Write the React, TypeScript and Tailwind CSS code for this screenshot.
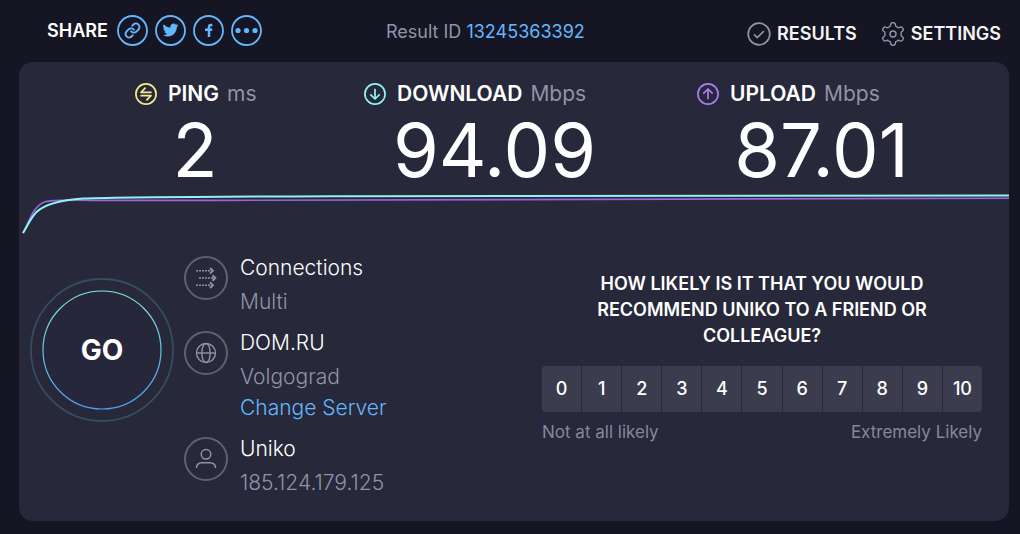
import React, { useState } from 'react';
import { clsx } from 'clsx';

interface Metric {
  name: string;
  unit: string;
  value: string;
  icon: React.ReactNode;
  labelClass: string;
}

// outline of a six-toothed gear centred in a 24px box
const gearPath =
  Array.from({ length: 96 }, (_, i) => {
    const a = (i / 96) * Math.PI * 2;
    const r = 9.7 + 1.6 * Math.tanh(2.6 * (Math.cos(6 * a) - 0.1));
    const x = 12 + r * Math.sin(a);
    const y = 12 - r * Math.cos(a);
    return `${i === 0 ? 'M' : 'L'}${x.toFixed(2)} ${y.toFixed(2)}`;
  }).join('') + 'Z';

const ShareCircle = ({ label, children }: { label: string; children: React.ReactNode }) => (
  <a href="#share" aria-label={label} className="block text-[#62b8ff]">
    <svg viewBox="0 0 31 31" className="h-[31px] w-[31px]" fill="none" stroke="currentColor">
      <circle cx="15.5" cy="15.5" r="14.5" strokeWidth="1.8" />
      {children}
    </svg>
  </a>
);

const InfoCircle = ({ children }: { children: React.ReactNode }) => (
  <svg viewBox="0 0 44 44" className="h-11 w-11 shrink-0" fill="none" stroke="#9193a8">
    <circle cx="22" cy="22" r="21" stroke="#5f6072" strokeWidth="2" />
    {children}
  </svg>
);

const PingIcon = () => (
  <svg viewBox="0 0 22 22" className="h-[22px] w-[22px]" fill="none" stroke="#f5ea8c" strokeWidth="1.7">
    <circle cx="11" cy="11" r="10.1" />
    <path d="M16.6 9.3H6l4.6-4.6M5.4 12.7H16l-4.6 4.6" strokeLinejoin="round" />
  </svg>
);

const ArrowIcon = ({ color, up }: { color: string; up?: boolean }) => (
  <svg viewBox="0 0 22 22" className="h-[22px] w-[22px]" fill="none" stroke={color} strokeWidth="1.7">
    <circle cx="11" cy="11" r="10.1" />
    <path
      d={up ? 'M11 16.3V6.2M6.3 10.6 11 6l4.7 4.6' : 'M11 5.7v10.1M6.3 11.4 11 16l4.7-4.6'}
      strokeLinejoin="round"
    />
  </svg>
);

const metrics: Metric[] = [
  { name: 'PING', unit: 'ms', value: '2', icon: <PingIcon />, labelClass: 'pl-[76px]' },
  {
    name: 'DOWNLOAD',
    unit: 'Mbps',
    value: '94.09',
    icon: <ArrowIcon color="#8ff5ec" />,
    labelClass: 'pl-[33px]',
  },
  {
    name: 'UPLOAD',
    unit: 'Mbps',
    value: '87.01',
    icon: <ArrowIcon color="#b07af7" up />,
    labelClass: 'pl-[39px]',
  },
];

const Header = () => (
  <header className="grid h-[62px] grid-cols-[339fr_615fr] items-start pr-[19px] pl-[47px] text-lg leading-6">
    <div className="flex items-center gap-[7px] pt-[15px]">
      <span className="w-[63px] font-semibold text-white">SHARE</span>
      <ShareCircle label="Copy link">
        <g
          transform="translate(7.1 7.1) scale(.7)"
          strokeWidth="2.7"
          strokeLinecap="round"
          strokeLinejoin="round"
        >
          <path d="M10 13a5 5 0 0 0 7.54.54l3-3a5 5 0 0 0-7.07-7.07l-1.72 1.71" />
          <path d="M14 11a5 5 0 0 0-7.54-.54l-3 3a5 5 0 0 0 7.07 7.07l1.71-1.71" />
        </g>
      </ShareCircle>
      <ShareCircle label="Share on Twitter">
        <path
          fill="currentColor"
          stroke="none"
          transform="translate(7.6 7.2) scale(.66)"
          d="M23.95 4.57a10 10 0 0 1-2.82.77 4.96 4.96 0 0 0 2.16-2.72c-.95.55-2 .95-3.13 1.18a4.92 4.92 0 0 0-8.38 4.48C7.69 8.09 4.07 6.13 1.64 3.16a4.92 4.92 0 0 0 1.52 6.57 4.9 4.9 0 0 1-2.23-.61v.06a4.92 4.92 0 0 0 3.95 4.83 5 5 0 0 1-2.21.08 4.94 4.94 0 0 0 4.6 3.42A9.87 9.87 0 0 1 0 19.54a14 14 0 0 0 7.55 2.21c9.05 0 14-7.5 14-13.98 0-.21 0-.42-.02-.63a9.94 9.94 0 0 0 2.46-2.55z"
        />
      </ShareCircle>
      <ShareCircle label="Share on Facebook">
        <path d="M19.4 9.9h-1.3c-1.5 0-2.1.7-2.1 2.1v9.9M12 14.8h7.2" strokeWidth="2.5" />
      </ShareCircle>
      <ShareCircle label="More">
        <g fill="currentColor" stroke="none">
          <circle cx="7" cy="15.5" r="2.6" />
          <circle cx="15.5" cy="15.5" r="2.6" />
          <circle cx="24" cy="15.5" r="2.6" />
        </g>
      </ShareCircle>
    </div>
    <div className="flex items-start justify-between">
      <p className="pt-5 text-[#9193a8]">
        Result ID <a href="#result" className="text-[#62b8ff]">13245363392</a>
      </p>
      <nav className="flex gap-6 pt-[22px] font-semibold text-[#f4f4f8]">
        <a href="#results" className="flex items-center gap-1.5">
          <svg viewBox="0 0 24 24" className="h-6 w-6" fill="none" stroke="#9193a8">
            <circle cx="12" cy="12" r="10.8" strokeWidth="1.7" />
            <path d="m7 12.4 3.2 3.2L17 9" strokeWidth="1.7" />
          </svg>
          RESULTS
        </a>
        <a href="#settings" className="flex items-center gap-1.5">
          <svg viewBox="0 0 24 24" className="h-6 w-6" fill="none" stroke="#9193a8" strokeWidth="1.4">
            <circle cx="12" cy="12" r="3" />
            <path d={gearPath} strokeLinejoin="round" />
          </svg>
          SETTINGS
        </a>
      </nav>
    </div>
  </header>
);

const SpeedGraph = () => (
  <svg viewBox="0 0 990 44" preserveAspectRatio="none" className="h-11 w-full" fill="none">
    <path
      d="M4 41C10 30 14 14 26 9.8C36 7 50 8.3 80 8.4L200 8.4C290 7 400 6.2 990 6.2"
      stroke="#9a63e0"
      strokeWidth="1.6"
    />
    <path
      d="M4 41C8 35 11 27 17 20.5C26 12 42 8 64 6.6C110 4.8 200 4.6 330 4.2L990 3.6"
      stroke="#8ff5ec"
      strokeWidth="2"
    />
  </svg>
);

const GoButton = () => (
  <button type="button" className="relative h-36 w-36 shrink-0 cursor-pointer text-[28px] font-bold text-white">
    <svg viewBox="0 0 144 144" className="absolute inset-0 h-full w-full" fill="none">
      <defs>
        <linearGradient id="ring" x1="0" y1="0" x2="0" y2="1">
          <stop offset="0" stopColor="#7ce8d4" />
          <stop offset="1" stopColor="#4f9ff0" />
        </linearGradient>
      </defs>
      <circle cx="72" cy="72" r="71" stroke="#364c60" strokeWidth="1.8" />
      <circle cx="72" cy="72" r="59" fill="#26273b" stroke="url(#ring)" strokeWidth="1.2" />
    </svg>
    <span className="relative">GO</span>
  </button>
);

const ConnectionInfo = () => (
  <div className="flex flex-col gap-[17px] text-[21px] leading-6 font-light text-[#9193a8]">
    <div className="flex gap-3">
      <InfoCircle>
        <path d="M12 14.8h15M15 22h15M12 29.2h15" strokeWidth="1.6" strokeDasharray="2 1" />
        <path
          d="m26 12 2.8 2.8L26 17.6M28.5 19.2l2.8 2.8-2.8 2.8M26 26.4l2.8 2.8L26 32"
          strokeWidth="2"
        />
      </InfoCircle>
      <div>
        <p className="text-white">Connections</p>
        <p className="mt-2.5">Multi</p>
      </div>
    </div>
    <div className="flex gap-3">
      <InfoCircle>
        <g strokeWidth="1.4">
          <circle cx="22" cy="22" r="9.5" />
          <ellipse cx="22" cy="22" rx="4.2" ry="9.5" />
          <path d="M12.5 22h19" />
        </g>
      </InfoCircle>
      <div>
        <p className="text-white">DOM.RU</p>
        <p className="mt-2.5">Volgograd</p>
        <a href="#servers" className="mt-[7px] block text-[#62b8ff]">Change Server</a>
      </div>
    </div>
    <div className="flex gap-3">
      <InfoCircle>
        <g strokeWidth="1.5">
          <circle cx="22" cy="17.3" r="4.8" />
          <path d="M12.5 31c0-3.5 2-5.3 5.5-5.3h8c3.5 0 5.5 1.8 5.5 5.3" />
        </g>
      </InfoCircle>
      <div>
        <p className="text-white">Uniko</p>
        <p className="mt-2.5">185.124.179.125</p>
      </div>
    </div>
  </div>
);

const Survey = () => {
  const [score, setScore] = useState<number | null>(null);

  return (
    <section className="ml-auto w-[440px]">
      <h2 className="mx-auto max-w-[360px] text-center text-lg leading-[26px] font-semibold text-white">
        HOW LIKELY IS IT THAT YOU WOULD RECOMMEND UNIKO TO A FRIEND OR COLLEAGUE?
      </h2>
      <div className="mt-[17px] grid grid-cols-11 gap-px overflow-hidden rounded">
        {Array.from({ length: 11 }, (_, n) => (
          <button
            key={n}
            type="button"
            onClick={() => setScore(n)}
            className={clsx(
              'h-[46px] cursor-pointer text-lg font-medium text-white',
              score === n ? 'bg-[#55566c]' : 'bg-[#3b3c4e]'
            )}
          >
            {n}
          </button>
        ))}
      </div>
      <div className="mt-2 flex justify-between text-[17px] leading-6 text-[#85879c]">
        <span>Not at all likely</span>
        <span>Extremely Likely</span>
      </div>
    </section>
  );
};

const App = () => (
  <div className="min-h-screen bg-[#151523] pb-[13px] font-['Inter',sans-serif]">
    <Header />
    <main className="mr-[11px] ml-[19px] rounded-[14px] bg-[#272839] pb-[26px]">
      <div className="grid grid-cols-[272fr_327fr_327fr] pt-[18px] pr-6 pl-10">
        {metrics.map((m) => (
          <div key={m.name}>
            <div className={clsx('flex items-center gap-[11px] text-[21px] leading-7', m.labelClass)}>
              {m.icon}
              <p className="flex gap-2">
                <span className="font-semibold text-white">{m.name}</span>
                <span className="text-[#9193a8]">{m.unit}</span>
              </p>
            </div>
            <p className="text-center text-[74px] leading-[84px] text-white">{m.value}</p>
          </div>
        ))}
      </div>
      <SpeedGraph />
      <div className="flex items-start pr-[27px] pl-[11px]">
        <div className="mt-[42px]">
          <GoButton />
        </div>
        <div className="mt-5 ml-[10px]">
          <ConnectionInfo />
        </div>
        <div className="mt-[35px] ml-auto">
          <Survey />
        </div>
      </div>
    </main>
  </div>
);

export default App;
